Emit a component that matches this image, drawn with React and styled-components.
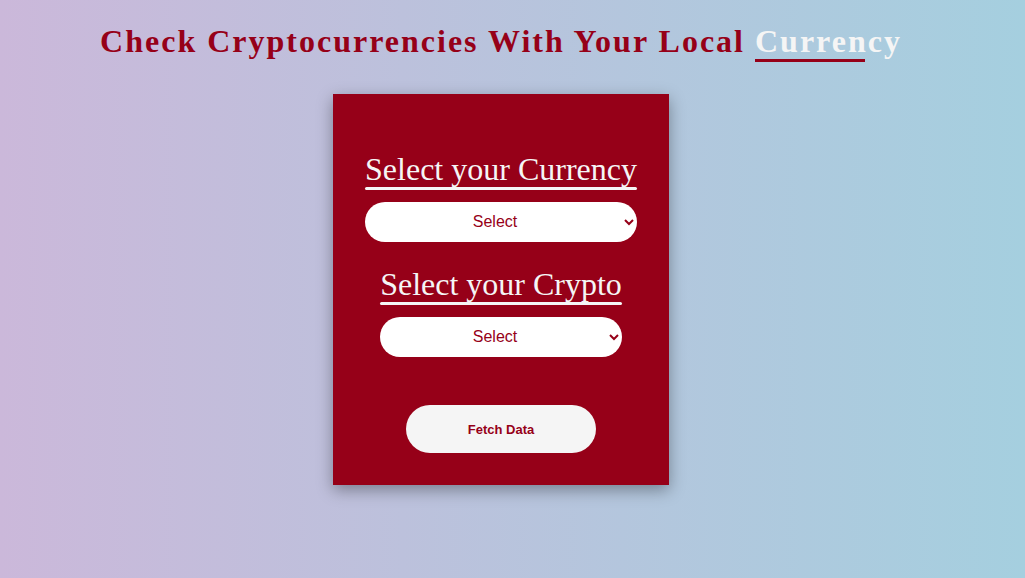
import React from "react";
import styled, { createGlobalStyle } from "styled-components";

const GlobalStyle = createGlobalStyle`
  * { box-sizing: border-box; margin: 0; padding: 0; }
  body {
    min-height: 100vh;
    font-family: "Liberation Serif", "Times New Roman", serif;
    background: linear-gradient(to right, #cbb8da, #a5cfdf);
  }
`;

const Page = styled.main`
  display: flex;
  flex-direction: column;
  align-items: center;
  padding: 23px 23px 32px 0;
`;

const Title = styled.h1`
  color: #960018;
  font-size: 32px;
  line-height: 37px;
  letter-spacing: 2px;
  text-align: center;
`;

const Highlight = styled.span`
  position: relative;
  color: #f5f5f5;

  &::after {
    content: "";
    position: absolute;
    left: 0;
    bottom: -3px;
    width: 75%;
    height: 3px;
    background: #960018;
  }
`;

const Card = styled.form`
  display: flex;
  flex-direction: column;
  align-items: center;
  margin-top: 34px;
  padding: 57px 32px 32px;
  background: #960018;
  box-shadow: 0 5px 15px rgba(0, 0, 0, 0.35);
`;

const Field = styled.div`
  display: flex;
  flex-direction: column;
  gap: 12px;
  margin-bottom: 24px;
`;

const Label = styled.label`
  position: relative;
  padding-bottom: 3px;
  color: #f5f5f5;
  font-size: 32px;
  line-height: 36px;

  &::after {
    content: "";
    position: absolute;
    left: 0;
    bottom: 0;
    width: 100%;
    height: 3px;
    border-radius: 2px;
    background: #f5f5f5;
  }
`;

const Select = styled.select`
  width: 100%;
  height: 40px;
  padding-bottom: 2px;
  border: none;
  border-radius: 20px;
  background: #fff;
  color: #960018;
  font-family: "Liberation Sans", Arial, sans-serif;
  font-size: 16px;
  text-align: center;
`;

const Button = styled.button`
  width: 190px;
  height: 48px;
  margin-top: 24px;
  border: none;
  border-radius: 24px;
  background: #f5f5f5;
  color: #960018;
  font-family: "Liberation Sans", Arial, sans-serif;
  font-size: 13px;
  font-weight: 700;
  cursor: pointer;
`;

export default function App() {
  return (
    <>
      <GlobalStyle />
      <Page>
        <Title>
          Check Cryptocurrencies With Your Local <Highlight>Currency</Highlight>
        </Title>
        <Card onSubmit={(event) => event.preventDefault()}>
          <Field>
            <Label htmlFor="currency">Select your Currency</Label>
            <Select id="currency">
              <option>Select</option>
            </Select>
          </Field>
          <Field>
            <Label htmlFor="crypto">Select your Crypto</Label>
            <Select id="crypto">
              <option>Select</option>
            </Select>
          </Field>
          <Button type="submit">Fetch Data</Button>
        </Card>
      </Page>
    </>
  );
}
